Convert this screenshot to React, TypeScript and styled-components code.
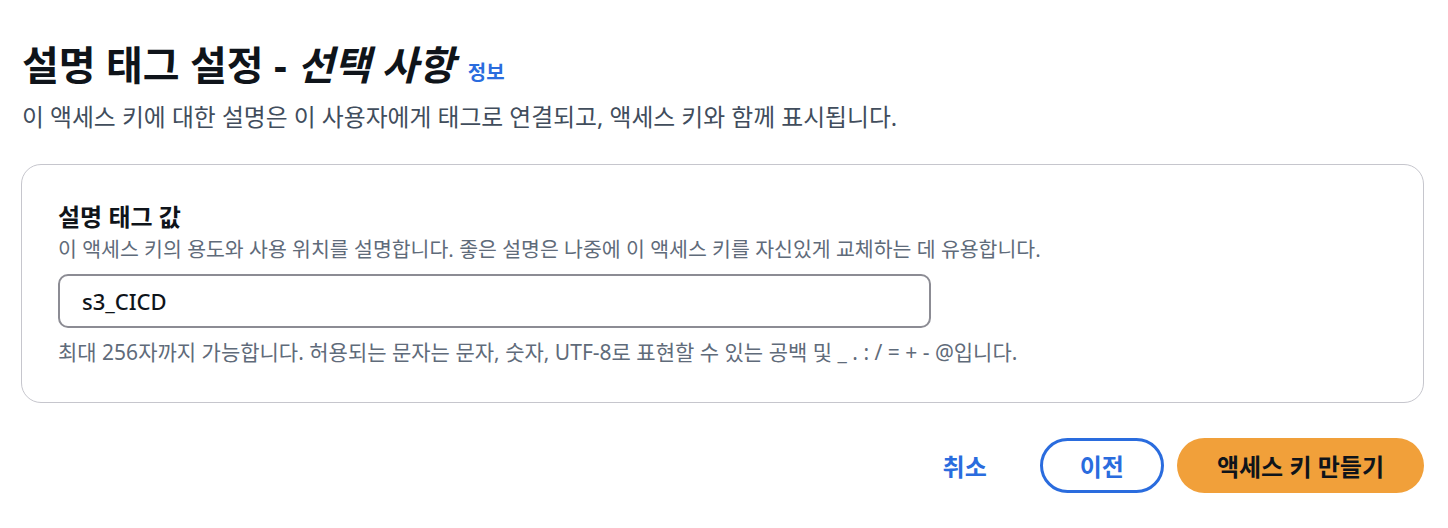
import React from "react";
import styled, { createGlobalStyle } from "styled-components";

const Global = createGlobalStyle`
  html, body { margin: 0; padding: 0; background: #ffffff; }
  body { font-family: "Noto Sans", "Noto Sans CJK KR", sans-serif; color: #0f141a; }
`;

const Page = styled.div`
  padding: 41px 24px 0 21px;
  width: 1448px;
  box-sizing: border-box;
`;

const Header = styled.header`
  display: flex;
  flex-direction: column;
  gap: 12px;
  padding-left: 1px;
`;

const TitleRow = styled.div`
  display: flex;
  align-items: baseline;
  gap: 13px;
`;

const Title = styled.h1`
  margin: 0;
  font-size: 40px;
  font-weight: 700;
  line-height: 48px;
  color: #0f141a;
`;

const Optional = styled.em`
  font-style: italic;
`;

const InfoLink = styled.a`
  font-size: 20px;
  font-weight: 700;
  color: #2a6cde;
  text-decoration: none;
`;

const Description = styled.p`
  margin: 0;
  font-size: 23.8px;
  line-height: 32px;
  color: #414d5c;
`;

const Card = styled.section`
  margin-top: 31px;
  border: 1px solid #c6c6cd;
  border-radius: 20px;
  padding: 36px 36px 34px 36px;
  display: flex;
  flex-direction: column;
`;

const Label = styled.label`
  font-size: 24px;
  font-weight: 700;
  line-height: 32px;
  color: #0f141a;
`;

const Help = styled.div`
  font-size: 20.5px;
  line-height: 32px;
  color: #5f6b7a;
`;

const Input = styled.input`
  margin-top: 9px;
  width: 873px;
  height: 54px;
  box-sizing: border-box;
  border: 2px solid #8c8c94;
  border-radius: 10px;
  padding: 0 22px;
  font-family: "Noto Sans", "Noto Sans CJK KR", sans-serif;
  font-size: 22px;
  font-weight: 500;
  color: #0f141a;
  outline: none;
`;

const Constraint = styled.div`
  margin-top: 8px;
  font-size: 21px;
  line-height: 32px;
  color: #5f6b7a;
`;

const Actions = styled.div`
  margin-top: 35px;
  display: flex;
  justify-content: flex-end;
  align-items: center;
  gap: 13px;
`;

const Button = styled.button<{ $variant: "link" | "normal" | "primary" }>`
  height: 55px;
  border-radius: 28px;
  font-family: "Noto Sans", "Noto Sans CJK KR", sans-serif;
  font-size: 24px;
  font-weight: 700;
  cursor: pointer;
  box-sizing: border-box;
  padding: 0 37px;
  border: ${(p) => (p.$variant === "normal" ? "3px solid #2a6cde" : "3px solid transparent")};
  background: ${(p) => (p.$variant === "primary" ? "#f1a03a" : "#ffffff")};
  color: ${(p) => (p.$variant === "primary" ? "#0f141a" : "#2a6cde")};
`;

export default function App() {
  return (
    <>
      <Global />
      <Page>
        <Header>
          <TitleRow>
            <Title>
              설명 태그 설정 - <Optional>선택 사항</Optional>
            </Title>
            <InfoLink href="#">정보</InfoLink>
          </TitleRow>
          <Description>
            이 액세스 키에 대한 설명은 이 사용자에게 태그로 연결되고, 액세스 키와 함께 표시됩니다.
          </Description>
        </Header>
        <Card>
          <Label htmlFor="tag">설명 태그 값</Label>
          <Help>
            이 액세스 키의 용도와 사용 위치를 설명합니다. 좋은 설명은 나중에 이 액세스 키를 자신있게 교체하는 데 유용합니다.
          </Help>
          <Input id="tag" defaultValue="s3_CICD" />
          <Constraint>
            최대 256자까지 가능합니다. 허용되는 문자는 문자, 숫자, UTF-8로 표현할 수 있는 공백 및 _ . : / = + - @입니다.
          </Constraint>
        </Card>
        <Actions>
          <Button $variant="link">취소</Button>
          <Button $variant="normal">이전</Button>
          <Button $variant="primary">액세스 키 만들기</Button>
        </Actions>
      </Page>
    </>
  );
}
